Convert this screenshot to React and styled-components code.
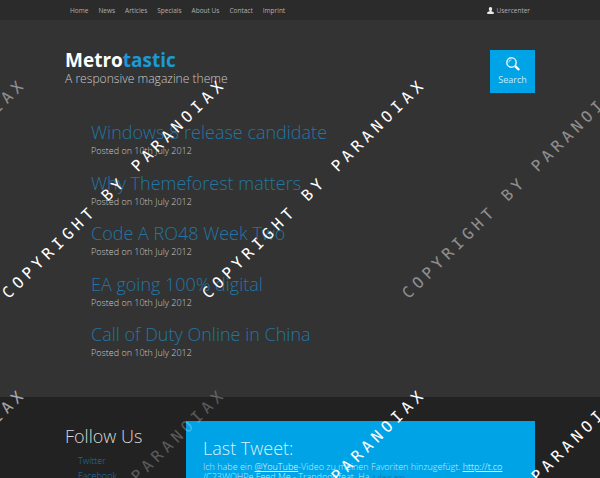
import React from "react";
import styled, { createGlobalStyle } from "styled-components";

const GlobalStyle = createGlobalStyle`
  * {
    box-sizing: border-box;
  }
  html, body {
    margin: 0;
    padding: 0;
    background: #333333;
  }
  body {
    font-family: "Open Sans", "Liberation Sans", sans-serif;
  }
`;

const Page = styled.div`
  position: relative;
  width: 600px;
  height: 478px;
  overflow: hidden;
  background: #333333;
  display: flex;
  flex-direction: column;
`;

const TopBar = styled.div`
  height: 20px;
  flex: none;
  background: #2b2b2b;
  display: flex;
  align-items: center;
  justify-content: space-between;
  padding: 0 65px 0 70px;
`;

const Nav = styled.nav`
  display: flex;
  gap: 10px;
`;

const NavLink = styled.a`
  font-size: 6.5px;
  color: #b0b0b0;
`;

const UserLink = styled.a`
  display: flex;
  align-items: center;
  gap: 2px;
  font-size: 6.5px;
  color: #b0b0b0;
  margin-right: 5px;
`;

const Header = styled.header`
  flex: none;
  display: flex;
  justify-content: space-between;
  padding: 30px 65px 0;
`;

const Brand = styled.div`
  padding-top: 0;
`;

const Logo = styled.h1`
  margin: 0;
  font-size: 19px;
  line-height: 20px;
  font-weight: 700;
  color: #ffffff;
  span {
    color: #1c9ad6;
  }
`;

const Tagline = styled.p`
  margin: 0;
  font-size: 12.1px;
  line-height: 18px;
  font-weight: 300;
  color: #c8c8c8;
`;

const SearchButton = styled.button`
  width: 45px;
  height: 43px;
  padding: 6px 0 0;
  border: 0;
  background: #00a3e6;
  color: #c4ebfb;
  font-family: inherit;
  font-size: 9px;
  line-height: 12px;
  display: flex;
  flex-direction: column;
  align-items: center;
  gap: 2px;
`;

const Posts = styled.main`
  flex: 1;
  min-height: 0;
  display: flex;
  flex-direction: column;
  gap: 7px;
  padding: 27px 65px 0 91px;
`;

const Post = styled.article`
  height: 43.5px;
  flex: none;
`;

const PostTitle = styled.h2`
  margin: 0;
  font-size: 18px;
  line-height: 25px;
  font-weight: 300;
  color: #2276a5;
`;

const PostDate = styled.p`
  margin: -1px 0 0;
  font-size: 9px;
  line-height: 13px;
  font-weight: 300;
  color: #c8c8c8;
`;

const Footer = styled.footer`
  height: 81px;
  flex: none;
  background: #222222;
  display: flex;
  padding: 24px 65px 0;
  overflow: hidden;
`;

const Follow = styled.div`
  width: 121px;
  flex: none;
  padding-top: 3px;
`;

const FollowTitle = styled.h3`
  margin: 0;
  font-size: 18px;
  line-height: 24px;
  font-weight: 300;
  color: #d8d8d8;
`;

const FollowList = styled.ul`
  margin: 5px 0 0;
  padding: 0 0 0 13px;
  list-style: none;
  font-size: 9px;
  line-height: 15px;
  font-weight: 300;
  color: #2276a5;
`;

const TweetBox = styled.section`
  flex: 1;
  height: 80px;
  background: #00a3e6;
  padding: 15px 17px 0;
  color: #c4ebfb;
`;

const TweetTitle = styled.h3`
  margin: 0 0 2px;
  font-size: 18px;
  line-height: 24px;
  font-weight: 300;
  color: #d8f2fd;
`;

const TweetText = styled.p`
  margin: 0;
  font-size: 9px;
  line-height: 9.500px;
  font-weight: 300;
  white-space: nowrap;
  a {
    color: #e6f7fe;
    text-decoration: underline;
  }
  small {
    font-size: 7px;
    color: #0b6a94;
  }
`;

const Watermark = styled.div`
  position: absolute;
  left: ${(p) => p.$x}px;
  top: ${(p) => p.$y}px;
  transform: rotate(-44.5deg);
  transform-origin: 0 50%;
  white-space: nowrap;
  font-family: "DejaVu Sans Mono", monospace;
  font-size: 15.5px;
  line-height: 20px;
  letter-spacing: 4.6px;
  pointer-events: none;
  color: #ffffff;
  opacity: ${(p) => p.$opacity};
`;

const navItems = ["Home", "News", "Articles", "Specials", "About Us", "Contact", "Imprint"];

const posts = [
  "Windows 8 release candidate",
  "Why Themeforest matters",
  "Code A RO48 Week Two",
  "EA going 100% digital",
  "Call of Duty Online in China",
];

const marks = [
  { x: -195, y: 286, opacity: 0.45 },
  { x: 5, y: 286, opacity: 1 },
  { x: 205, y: 286, opacity: 1 },
  { x: 405, y: 286, opacity: 0.45 },
  { x: -195, y: 596, opacity: 0.6 },
  { x: 5, y: 596, opacity: 0.25 },
  { x: 205, y: 596, opacity: 1 },
  { x: 405, y: 596, opacity: 1 },
];

const UserIcon = () => (
  <svg width="7" height="7" viewBox="0 0 14 14" fill="#e8e8e8">
    <path d="M7 0c2.2 0 3.4 1.7 3.4 3.8 0 1.6-.7 3-1.5 3.8v1.1c1.8.7 4.1 1.4 4.6 2.5V14H.5v-2.800c.5-1.100 2.800-1.800 4.600-2.500V7.600C4.300 6.800 3.600 5.400 3.600 3.800 3.600 1.700 4.800 0 7 0z" />
  </svg>
);

const SearchIcon = () => (
  <svg width="16" height="16" viewBox="0 0 16 16" fill="none">
    <circle cx="6.500" cy="6.500" r="4.700" stroke="#d8f2fd" strokeWidth="1.500" />
    <path d="M3.800 6.500a2.700 2.700 0 0 1 2.700-2.700" stroke="#d8f2fd" strokeWidth="0.800" />
    <path d="M10.200 10.200l4 3.800" stroke="#ffffff" strokeWidth="2.400" />
  </svg>
);

export default function App() {
  return (
    <Page>
      <GlobalStyle />
      <TopBar>
        <Nav>
          {navItems.map((item) => (
            <NavLink key={item}>{item}</NavLink>
          ))}
        </Nav>
        <UserLink>
          <UserIcon />
          Usercenter
        </UserLink>
      </TopBar>
      <Header>
        <Brand>
          <Logo>
            Metro<span>tastic</span>
          </Logo>
          <Tagline>A responsive magazine theme</Tagline>
        </Brand>
        <SearchButton>
          <SearchIcon />
          Search
        </SearchButton>
      </Header>
      <Posts>
        {posts.map((title) => (
          <Post key={title}>
            <PostTitle>{title}</PostTitle>
            <PostDate>Posted on 10th July 2012</PostDate>
          </Post>
        ))}
      </Posts>
      <Footer>
        <Follow>
          <FollowTitle>Follow Us</FollowTitle>
          <FollowList>
            <li>Twitter</li>
            <li>Facebook</li>
          </FollowList>
        </Follow>
        <TweetBox>
          <TweetTitle>Last Tweet:</TweetTitle>
          <TweetText>
            Ich habe ein <a>@YouTube</a>-Video zu meinen Favoriten hinzugefügt. <a>http://t.co</a>
            <br />
            /C23WOHPe Feed Me - Trandoor feat. Ha <small>4 days ago</small>
          </TweetText>
        </TweetBox>
      </Footer>
      {marks.map((m) => (
        <Watermark key={`${m.x}-${m.y}`} $x={m.x} $y={m.y} $opacity={m.opacity}>
          COPYRIGHT BY PARANOIAX
        </Watermark>
      ))}
    </Page>
  );
}
